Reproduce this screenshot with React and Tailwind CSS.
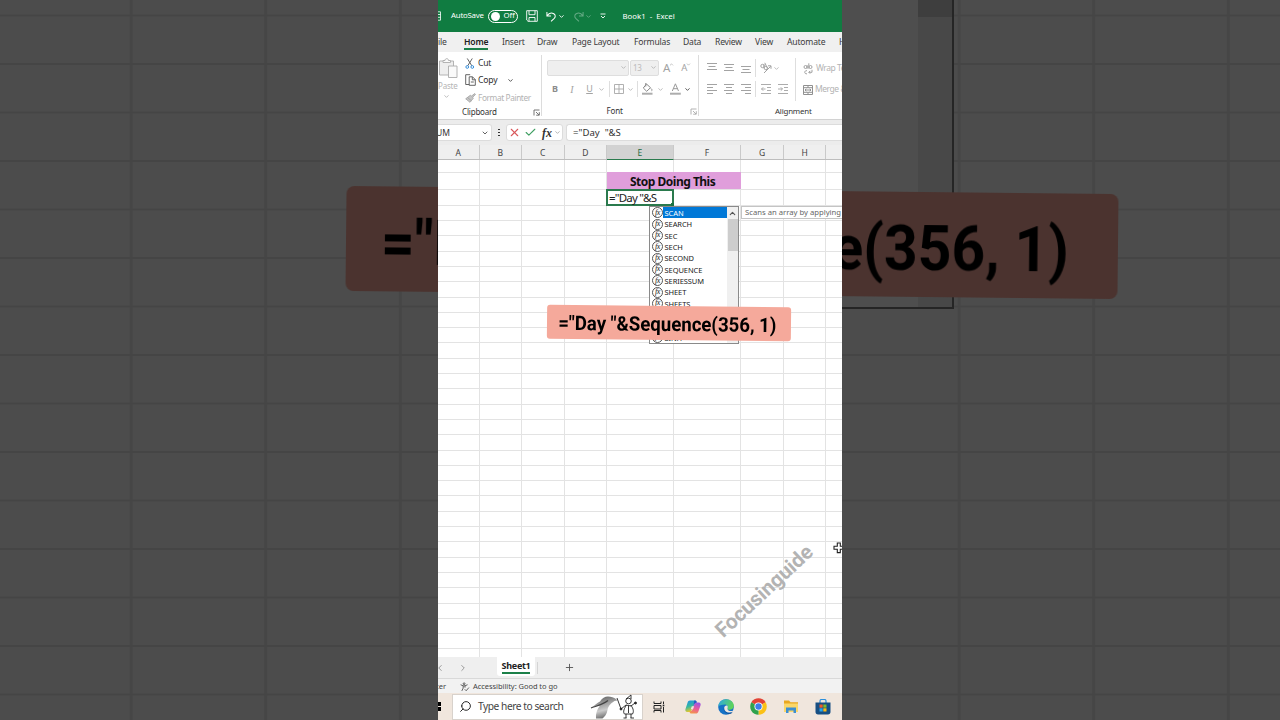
import { ChevronDown, ChevronLeft, ChevronRight, ChevronUp, Plus, X, Check, Search } from 'lucide-react';

const tabs = [
    { label: 'ile', width: 'w-[26px]' },
    { label: 'Home', width: 'w-[38px]', active: true },
    { label: 'Insert', width: 'w-[35px]' },
    { label: 'Draw', width: 'w-[35px]' },
    { label: 'Page Layout', width: 'w-[62px]' },
    { label: 'Formulas', width: 'w-[49px]' },
    { label: 'Data', width: 'w-[32px]' },
    { label: 'Review', width: 'w-[40px]' },
    { label: 'View', width: 'w-[32px]' },
    { label: 'Automate', width: 'w-[52px]' },
    { label: 'H', width: 'w-[26px]' },
];

const columns = [
    { name: 'A', width: 'w-[41.5px]' },
    { name: 'B', width: 'w-[42.3px]' },
    { name: 'C', width: 'w-[42.8px]' },
    { name: 'D', width: 'w-[42.4px]' },
    { name: 'E', width: 'w-[67px]' },
    { name: 'F', width: 'w-[67px]' },
    { name: 'G', width: 'w-[43px]' },
    { name: 'H', width: 'w-[42.5px]' },
    { name: '', width: 'w-[43px]' },
];

const functions = [
    'SCAN', 'SEARCH', 'SEC', 'SECH', 'SECOND', 'SEQUENCE',
    'SERIESSUM', 'SHEET', 'SHEETS', 'SIGN', 'SIN', 'SINH',
];

const Chevron = ({ className = 'text-[#b5b5b5]' }) => (
    <ChevronDown size={7} strokeWidth={3} className={`shrink-0 ${className}`} />
);

const Launcher = ({ className }) => (
    <svg viewBox="0 0 7 7" className={`size-[7px] ${className}`} fill="none" stroke="currentColor" strokeWidth="0.9">
        <path d="M6.5 1H1v5.5M3 3l3 3M6.3 3.2v3H3.2" />
    </svg>
);

const Lines = ({ rows }) => (
    <svg viewBox="0 0 10 12" className="w-[10px] h-[12px]" stroke="#a3a3a3" strokeWidth="1">
        {rows.map(([x1, x2, y]) => (
            <path key={y} d={`M${x1} ${y}H${x2}`} />
        ))}
    </svg>
);

const TitleBar = () => (
    <div className="h-8 shrink-0 bg-[#107c41] text-white flex items-center text-[7.8px]">
        <svg viewBox="0 0 3 10" className="w-[3px] h-[10px]" fill="none" stroke="#fff" strokeWidth="0.8">
            <path d="M0 .8h2.5v8.4H0M0 3.5h2.5M0 6.3h2.5" />
        </svg>
        <span className="ml-[10px] w-[37px] whitespace-nowrap tracking-[-0.2px]">AutoSave</span>
        <span className="w-[30px] h-[13px] rounded-full border border-white flex items-center pl-[2px]">
            <span className="size-[9px] rounded-full bg-white" />
            <span className="ml-[3.5px]">Off</span>
        </span>
        <svg viewBox="0 0 12 12" className="ml-[8px] size-[12px]" fill="none" stroke="#fff" strokeWidth="0.9">
            <path d="M.7.7h10.6v10.6H2L.7 10zM3 .7v4h6v-4M3 11.3V7.5h6v3.8" />
        </svg>
        <svg viewBox="0 0 12 12" className="ml-[8px] w-[11px] h-[13px]" fill="none" stroke="#fff" strokeWidth="1.1">
            <path d="M1 1v4.5h4.5M1.2 5.2C3 2.5 6 1.5 8.5 3c2 1.2 2 3.5.5 5L5.5 11.3" />
        </svg>
        <Chevron className="ml-px text-white" />
        <svg viewBox="0 0 12 12" className="ml-[8px] w-[11px] h-[13px] opacity-35" fill="none" stroke="#fff" strokeWidth="1.1">
            <path d="M11 1v4.5H6.5M10.8 5.2C9 2.5 6 1.5 3.5 3c-2 1.2-2 3.5-.5 5l3.5 3.3" />
        </svg>
        <Chevron className="ml-px text-white opacity-35" />
        <svg viewBox="0 0 6 6" className="ml-[8px] size-[6px]" fill="none" stroke="#fff" strokeWidth="0.9">
            <path d="M.5 1h5M1 3l2 2 2-2" />
        </svg>
        <span className="ml-[16.5px] pt-px whitespace-pre">Book1  -  Excel</span>
    </div>
);

const Tabs = () => (
    <div className="h-5 shrink-0 bg-[#f0f0f0] flex text-[8.6px] text-[#3b3b3b] tracking-[-0.2px]">
        {tabs.map((tab) => (
            <div key={tab.label} className={`shrink-0 whitespace-nowrap ${tab.width}`}>
                <span
                    className={`inline-block h-[18px] leading-[21px] ${
                        tab.active ? 'font-semibold text-[#222] border-b-2 border-[#1c8049]' : ''
                    }`}
                >
                    {tab.label}
                </span>
            </div>
        ))}
    </div>
);

const Clipboard = () => (
    <div className="w-[104px] shrink-0 border-r border-[#dcdcdc] flex flex-col my-[3px]">
        <div className="flex h-[51px]">
            <div className="w-[20px] flex flex-col items-start text-[#b5b5b5]">
                <svg viewBox="0 0 20 22" className="w-[20px] h-[22px] mt-[2px]" fill="#fafafa" stroke="#ababab" strokeWidth="0.9">
                    <path d="M1.5 4h14v14h-14z" fill="#eee" />
                    <path d="M5 5.5V3.5h2c0-2.500 3.500-2.500 3.500 0h2v2z" />
                    <path d="M10.5 9h8.500v11.500h-8.500z" />
                </svg>
                <span className="text-[8px] leading-[10px] mt-[2px] tracking-[-0.2px]">Paste</span>
                <Chevron className="ml-[5px] mt-[2px] text-[#b5b5b5]" />
            </div>
            <div className="ml-[7px] flex flex-col text-[8.6px] text-[#2e2e2e] whitespace-nowrap tracking-[-0.2px]">
                <div className="h-[17.5px] flex items-center">
                    <svg viewBox="0 0 10 12" className="w-[10px] h-[11px] mr-[3px]" fill="none" strokeWidth="1">
                        <path d="M2 .5l5 8M7.5.5l-5 8" stroke="#555" />
                        <circle cx="2" cy="9.8" r="1.5" stroke="#2b88d8" />
                        <circle cx="7.5" cy="9.8" r="1.5" stroke="#2b88d8" />
                    </svg>
                    Cut
                </div>
                <div className="h-[17.5px] flex items-center">
                    <svg viewBox="0 0 11 12" className="w-[11px] h-[12px] mr-[2px]" fill="#fff" stroke="#555" strokeWidth="0.9">
                        <path d="M5 10.5H.7V.7h4.500" fill="none" />
                        <path d="M4.2 2.8h3.300l2.800 2.800v5.700H4.200zM7.300 2.800v3h3M5.800 8h3" />
                    </svg>
                    Copy
                    <Chevron className="ml-[10px] text-[#444]" />
                </div>
                <div className="h-[17.5px] flex items-center pt-px text-[#b3b3b3]">
                    <svg viewBox="0 0 11 10" className="w-[11px] h-[10px] mr-[2px]" fill="#c6c6c6" stroke="#a0a0a0" strokeWidth="0.8">
                        <path d="M6.5 3L9.8.6l.7.8L7.7 4.3l.6 1L5 9.3.7 5.8 5.3 2.3z" />
                        <path d="M2.5 4.5l3.800 3.200" />
                    </svg>
                    <span className="tracking-[-0.4px] text-[8.3px]">Format Painter</span>
                </div>
            </div>
        </div>
        <div className="flex items-center h-[12px] text-[8px] text-[#333]">
            <span className="ml-[24px] w-[70.5px] tracking-[-0.18px]">Clipboard</span>
            <Launcher className="text-[#666]" />
        </div>
    </div>
);

const FontGroup = () => (
    <div className="w-[157px] shrink-0 border-r border-[#dcdcdc] flex flex-col my-[3px] text-[#a3a3a3]">
        <div className="flex flex-col h-[51px]">
            <div className="flex items-center h-[25px] pl-[5px]">
                <div className="w-[82px] h-[16px] rounded-[2px] bg-[#efefef] border border-[#dedede] flex items-center justify-end pr-px">
                    <Chevron />
                </div>
                <div className="ml-px w-[29px] h-[16px] rounded-[2px] bg-[#efefef] border border-[#dedede] flex items-center justify-between pl-[2px] pr-px text-[8px] tracking-[-0.3px] text-[#bbb]">
                    13
                    <Chevron />
                </div>
                <span className="ml-[4px] text-[11.5px] leading-none">A</span>
                <ChevronUp size={5} strokeWidth={3} className="mb-[7px] -ml-px" />
                <span className="ml-[7px] text-[9.5px] leading-none">A</span>
                <ChevronDown size={5} strokeWidth={3} className="mb-[7px] -ml-px" />
            </div>
            <div className="flex items-center h-[18px] text-[9px]">
                <span className="w-[26px] text-center font-bold text-[#8c8c8c]">B</span>
                <span className="w-[8px] text-center italic font-['Liberation_Serif',serif] text-[10px]">I</span>
                <span className="ml-[9px] w-[9px] text-center underline">U</span>
                <Chevron className="ml-[4px] text-[#b5b5b5]" />
                <span className="ml-[4px] h-[16px] w-px bg-[#dedede]" />
                <svg viewBox="0 0 10 10" className="ml-[3.5px] size-[10px]" fill="none" stroke="#a8a8a8" strokeWidth="0.9">
                    <path d="M.5.5h9v9h-9zM5 .5v9M.5 5h9" />
                </svg>
                <Chevron className="ml-[3.5px] text-[#b5b5b5]" />
                <span className="ml-[3px] h-[16px] w-px bg-[#dedede]" />
                <svg viewBox="0 0 11 12" className="ml-[4px] w-[11px] h-[12px]" fill="none" stroke="#888" strokeWidth="1">
                    <path d="M4.5 1l4 3.700-3.800 3.600L1.300 5zM3.800 0v3.500M9 5.500c1.500 1.300 1 2.300.5 2.300" />
                    <path d="M0 10.7h10.500" strokeWidth="2" stroke="#adadad" />
                </svg>
                <Chevron className="ml-[3.5px] text-[#b5b5b5]" />
                <svg viewBox="0 0 11 12" className="ml-[6px] w-[11px] h-[12px]" fill="none" stroke="#999" strokeWidth="1">
                    <path d="M2.3 8L5.400.800 8.500 8M3.300 5.700h4.200" />
                    <path d="M0 10.7h10.800" strokeWidth="2" stroke="#adadad" />
                </svg>
                <Chevron className="ml-[3.5px] text-[#444]" />
            </div>
        </div>
        <div className="flex items-center h-[12px] pt-[2px] text-[8px] text-[#333]">
            <span className="ml-[64.5px] w-[83px] tracking-[-0.18px]">Font</span>
            <Launcher className="text-[#aaa]" />
        </div>
    </div>
);

const Alignment = () => (
    <div className="flex flex-col flex-1 min-w-0 my-[3px] text-[8.5px] text-[#b3b3b3] whitespace-nowrap">
        <div className="flex h-[51px]">
            <div className="w-[96px] shrink-0 pt-[4px]">
                <div className="flex items-center h-[18px] pl-[8px]">
                    <Lines rows={[[0, 10, 1.5], [1.5, 8.5, 4.5], [0, 10, 7.5]]} />
                    <span className="w-[7px]" />
                    <Lines rows={[[0, 10, 2.5], [1.5, 8.5, 5.5], [0, 10, 8.5]]} />
                    <span className="w-[7px]" />
                    <Lines rows={[[0, 10, 4.5], [1.5, 8.5, 7.5], [0, 10, 10.5]]} />
                    <span className="ml-[4px] h-[18px] w-px bg-[#dedede]" />
                    <svg viewBox="0 0 12 12" className="ml-[4px] size-[12px]" fill="none" stroke="#a3a3a3" strokeWidth="1">
                        <circle cx="2.5" cy="4" r="1.7" />
                        <circle cx="5.8" cy="6" r="1.7" />
                        <path d="M4 2.2v4M4.800.800l2.400 5M4 11l6.800-6.800M8 3.800h3v3" />
                    </svg>
                    <Chevron className="ml-px text-[#b5b5b5]" />
                </div>
                <div className="flex items-center h-[18px] mt-[3px] pl-[8px]">
                    <Lines rows={[[0, 10, 1.5], [0, 6, 4.5], [0, 10, 7.5], [0, 6, 10.5]]} />
                    <span className="w-[7px]" />
                    <Lines rows={[[0, 10, 1.5], [2, 8, 4.5], [0, 10, 7.5], [2, 8, 10.5]]} />
                    <span className="w-[7px]" />
                    <Lines rows={[[0, 10, 1.5], [4, 10, 4.5], [0, 10, 7.5], [4, 10, 10.5]]} />
                    <span className="ml-[4px] h-[16px] w-px bg-[#dedede]" />
                    <svg viewBox="0 0 10 12" className="ml-[5px] w-[10px] h-[12px]" fill="none" stroke="#a3a3a3" strokeWidth="0.9">
                        <path d="M0 1.5h10M6 4.500h4M6 7.500h4M0 10.500h10M4.500 6H.500M2.200 4.300L.500 6l1.700 1.700" />
                    </svg>
                    <svg viewBox="0 0 10 12" className="ml-[7px] w-[10px] h-[12px]" fill="none" stroke="#a3a3a3" strokeWidth="0.9">
                        <path d="M0 1.5h10M6 4.500h4M6 7.500h4M0 10.500h10M0 6h4.500M2.800 4.300L4.500 6 2.800 7.700" />
                    </svg>
                </div>
            </div>
            <div className="border-l border-[#dedede] mt-[3px] h-[43px] pl-[7px] tracking-[-0.45px]">
                <div className="flex items-center h-[20px] pt-px">
                    <svg viewBox="0 0 10 12" className="w-[10px] h-[12px]" fill="none" stroke="#999" strokeWidth="0.9">
                        <circle cx="2.5" cy="4" r="1.5" />
                        <path d="M4.2 2.2v3.500M5.800.300v5.400" />
                        <circle cx="7.5" cy="4" r="1.5" />
                        <path d="M4 7.7c-3-.500-3 3.600 0 3.100M9 6.800v2.500H5.800M7.200 7.900L5.800 9.300l1.400 1.400" />
                    </svg>
                    <span className="ml-[3px]">Wrap Text</span>
                </div>
                <div className="flex items-center h-[23px]">
                    <svg viewBox="0 0 10 10" className="size-[10px]" fill="none" stroke="#909090" strokeWidth="1">
                        <path d="M.5.5h9v9h-9zM.5 2.7h9M.5 7.3h9M5 .5v2.200M5 7.300v2.200M2 5h6M3.300 3.800L2 5l1.300 1.200M6.700 3.800L8 5 6.700 6.200" />
                    </svg>
                    <span className="ml-[2px]">Merge &amp; Center</span>
                </div>
            </div>
        </div>
        <div className="h-[12px] pl-[76px] leading-[14px] text-[7.9px] tracking-[-0.2px] text-[#333]">Alignment</div>
    </div>
);

const FormulaBar = () => (
    <div className="h-[26px] shrink-0 bg-[#ececec] border-t border-[#d2d2d2] flex items-center text-[8.5px] text-[#333]">
        <div className="w-[54px] h-[17px] bg-white border border-l-0 border-[#dcdcdc] rounded-r-[3px] flex items-center justify-between pr-[2px]">
            <span className="-ml-[2px] pt-px">UM</span>
            <ChevronDown size={8} strokeWidth={2.5} className="text-[#444]" />
        </div>
        <div className="w-[14px] flex flex-col items-center gap-[1.5px]">
            <span className="size-[1.5px] bg-[#333]" />
            <span className="size-[1.5px] bg-[#333]" />
            <span className="size-[1.5px] bg-[#333]" />
        </div>
        <div className="w-[57px] h-[17px] bg-white border border-[#dcdcdc] rounded-[3px] flex items-center">
            <X size={13} strokeWidth={2} className="ml-px text-[#d9575b]" />
            <Check size={13} strokeWidth={2} className="ml-[3px] text-[#3f9f62]" />
            <span className="ml-[5px] font-['Liberation_Serif',serif] italic text-[12px] font-semibold leading-none">fx</span>
            <ChevronDown size={7} strokeWidth={2.5} className="ml-[2px] text-[#999]" />
        </div>
        <div className="ml-[3px] flex-1 h-[17px] bg-white border border-r-0 border-[#dcdcdc] rounded-l-[3px] pl-[6px] leading-[16px] text-[9.6px] whitespace-pre">
            {'="Day  "&S'}
        </div>
    </div>
);

const GridRow = ({ height }) => (
    <div className={`flex shrink-0 border-b border-[#e3e3e3] ${height}`}>
        {columns.map((col, i) => (
            <div key={i} className={`shrink-0 border-r border-[#e3e3e3] ${col.width}`} />
        ))}
    </div>
);

const Suggestions = () => (
    <div className="absolute left-[211px] top-[61px] w-[90px] h-[138px] bg-white border border-[#8a8a8a] flex overflow-hidden">
        <div className="flex-1">
            {functions.map((name, i) => (
                <div key={name} className="h-[11.35px] flex items-center pl-[2px] text-[7.5px] text-[#222]">
                    <span className="size-[11px] shrink-0 rounded-full border border-[#555] flex items-center justify-center font-['Liberation_Serif',serif] italic text-[8px] leading-none tracking-[-0.5px]">
                        fx
                    </span>
                    <span className={`flex-1 pl-[1.5px] h-full leading-[12px] tracking-[-0.08px] ${i === 0 ? 'bg-[#0078d7] text-white' : ''}`}>
                        {name}
                    </span>
                </div>
            ))}
        </div>
        <div className="w-[11px] bg-[#f0f0f0] flex flex-col items-center">
            <ChevronUp size={9} strokeWidth={3} className="text-[#555] my-[1.5px]" />
            <div className="w-[10px] h-[32px] bg-[#cdcdcd]" />
        </div>
    </div>
);

const Sheet = () => (
    <div className="relative flex-1 min-h-0 flex flex-col overflow-hidden bg-white">
        <div className="h-[15px] shrink-0 flex bg-[#efefef] border-b border-[#bdbdbd] text-[8.5px] leading-[15px] text-[#444]">
            {columns.map((col, i) => (
                <div
                    key={i}
                    className={`shrink-0 text-center border-r border-[#c9c9c9] ${col.width} ${
                        col.name === 'E' ? 'bg-[#d2d2d2] text-[#1e6b41] border-b border-b-[#2a7a4d] h-[15px]' : ''
                    }`}
                >
                    {col.name}
                </div>
            ))}
        </div>
        <GridRow height="h-[13px]" />
        <GridRow height="h-[17.3px]" />
        <GridRow height="h-[15.5px]" />
        {Array.from({ length: 30 }, (_, i) => (
            <GridRow key={i} height="h-[15.31px]" />
        ))}

        <div className="absolute left-[169px] top-[27px] w-[134px] h-[17px] bg-[#e09edb] pl-[23px] font-bold text-[12px] leading-[20px] text-[#111] tracking-[-0.5px]">
            Stop Doing This
        </div>
        <div className="absolute left-[168px] top-[44px] w-[68px] h-[17px] bg-white border-2 border-[#2a7a4d] pl-px text-[11.5px] leading-[14px] text-[#222] whitespace-nowrap tracking-[-0.8px]">
            ="Day "&amp;S
            <span className="absolute -right-[2px] -bottom-[2px] size-[3px] bg-[#1a7343]" />
        </div>
        <Suggestions />
        <div className="absolute left-[303px] top-[61px] w-[130px] h-[13px] bg-white border border-[#c4c4c4] pl-[3px] text-[7.7px] leading-[11px] text-[#666] whitespace-nowrap">
            Scans an array by applying a
        </div>
        <div className="absolute left-[109px] top-[161px] w-[244px] h-[34px] rounded-[3px] bg-[#f5a99b] rotate-[0.6deg] flex items-center justify-center pr-[4px] pt-px font-['Roboto',sans-serif] font-bold text-[20px] text-black whitespace-nowrap">
            <span className="scale-x-[0.93]">="Day "&amp;Sequence(356, 1)</span>
        </div>
        <div className="absolute left-[256px] top-[432px] w-[140px] h-[28px] -rotate-[43deg] text-center leading-[28px] font-['Roboto',sans-serif] font-bold text-[20.7px] text-[#b3b3b3]">
            Focusinguide
        </div>
        <svg viewBox="0 0 12 12" className="absolute left-[395px] top-[397px] size-[12px]" fill="#fff" stroke="#222" strokeWidth="1.1">
            <path d="M4.3 1h3v3.300h3.300v3H7.300v3.300h-3V7.300H1v-3h3.300z" />
        </svg>
    </div>
);

const SheetTabs = () => (
    <div className="h-[22px] shrink-0 bg-[#efefef] border-b border-[#d9d9d9] flex items-start text-[#888]">
        <ChevronLeft size={10} className="-ml-[3px] mt-[6px]" />
        <ChevronRight size={10} className="ml-[13px] mt-[6px]" />
        <div className="ml-[29px] w-[38px] h-[19px] rounded-b-[3px] bg-white flex justify-center">
            <span className="h-[17px] border-b-2 border-[#1c8049] text-[9px] leading-[18px] font-bold text-[#222] tracking-[-0.3px]">Sheet1</span>
        </div>
        <span className="ml-[2px] mt-[5px] w-px h-[12px] bg-[#d4d4d4]" />
        <Plus size={11} className="ml-[26px] mt-[5px] text-[#555]" />
    </div>
);

const StatusBar = () => (
    <div className="h-[14px] shrink-0 bg-[#f2f2f2] flex items-center pt-px text-[7.5px] text-[#444] whitespace-nowrap">
        <span className="w-[22px] -ml-[2px] mr-[2px]">ter</span>
        <svg viewBox="0 0 11 10" className="w-[10px] h-[10px]" fill="none" stroke="#444" strokeWidth="0.9">
            <circle cx="4.5" cy="1.4" r="1" />
            <path d="M.7 2.5l2.800 1.200h2l2.800-1.200M3.500 3.700v2.500L2 9.300M5.500 3.700v2M5.200 7.500l1.600 1.600 3-3.500" />
        </svg>
        <span className="ml-[3px] tracking-[-0.05px]">Accessibility: Good to go</span>
    </div>
);

const SearchArt = () => (
    <svg viewBox="0 0 48 25" className="w-[48px] h-[25px] shrink-0" fill="none">
        <defs>
            <linearGradient id="dolphin" x1="0" y1="0" x2="0.3" y2="1">
                <stop offset="0" stopColor="#555" />
                <stop offset="0.4" stopColor="#999" />
                <stop offset="0.7" stopColor="#ccc" />
                <stop offset="1" stopColor="#777" />
            </linearGradient>
        </defs>
        <path d="M1 14C5 11 7 9 10 7.5 12 4 15 2.5 18 2.5c3 0 6 1 8 2.500l1.500 1.500-3 .5c-5 3-6.500 6-7 9-.5 4-3 7-5 8.500H6c-.5-5 1-9 4-13-3 0-6 1-9 2.500z" fill="url(#dolphin)" />
        <path d="M1 14c5-2 11-3 17-7.500" stroke="#444" strokeWidth="1.2" />
        <g stroke="#222" strokeWidth="0.9">
            <path d="M27 4l4 11M31 15l5-4 5 1 4-3M36 5l5-4v4" />
            <circle cx="38.5" cy="7" r="2.8" />
            <path d="M36.5 11c-2 3-4 7-2 9h8c2-3 0-7-2-9M36 20v4M41 20v4M33.500 24h3M40.500 24h3.500M38.500 12v7" />
            <circle cx="31" cy="15" r="1" fill="#222" />
            <circle cx="45.5" cy="9" r="1" fill="#222" />
        </g>
    </svg>
);

const Taskbar = () => (
    <div className="h-[27px] shrink-0 bg-[#f0e6dd] flex items-center">
        <div className="w-[3px] flex flex-col gap-px">
            <span className="h-[4px] bg-black" />
            <span className="h-[4px] bg-black" />
        </div>
        <div className="ml-[11px] w-[191px] h-[26px] bg-white border border-[#d8d2cc] flex items-center">
            <Search size={13} strokeWidth={1.8} className="ml-[6px] text-[#222] -scale-x-100" />
            <span className="ml-[6px] w-[112px] pt-px text-[10.2px] tracking-[-0.45px] text-[#444] whitespace-nowrap">Type here to search</span>
            <SearchArt />
        </div>
        <svg viewBox="0 0 12 12" className="ml-[10px] size-[12px]" fill="none" stroke="#222" strokeWidth="1">
            <path d="M1 .5v2h7v-2M1 4.5h7v3.500H1zM1 11.500v-2h7v2M10.500.500v2.500M10.500 6v5.500" />
            <path d="M9.7 4.5h1.600" strokeWidth="1.7" />
        </svg>
        <svg viewBox="0 0 16 16" className="ml-[20px] size-[16px]">
            <defs>
                <linearGradient id="cpLeft" x1="0" y1="0" x2="0.3" y2="1">
                    <stop offset="0" stopColor="#1f8fe8" />
                    <stop offset="0.55" stopColor="#35b8a0" />
                    <stop offset="1" stopColor="#e9c82b" />
                </linearGradient>
                <linearGradient id="cpRight" x1="0.5" y1="0" x2="0.2" y2="1">
                    <stop offset="0" stopColor="#a056e0" />
                    <stop offset="0.5" stopColor="#ea5a9a" />
                    <stop offset="1" stopColor="#f59a45" />
                </linearGradient>
            </defs>
            <path d="M5 1.5h5c1 0 1.300.800 1.700 2L9 5 6.500 11.500c-.5 1-1 1.500-2 1.500H2.300C.500 13 0 11.500.500 10L2.700 3.300C3 2.200 3.800 1.500 5 1.500z" fill="url(#cpLeft)" />
            <path d="M11.5 3.5h2.200c1.800 0 2.300 1.500 1.800 3l-2.200 6.200c-.4 1.200-1.200 1.800-2.300 1.800H6.300c-1 0-1.500-.800-1.800-1.800L7 11.500 9.500 5c.4-1 1-1.500 2-1.500z" fill="url(#cpRight)" />
            <path d="M9.3 1.5h1c1 0 1.200.800 1.600 2-1.500 0-2 .500-2.400 1.500L8 9z" fill="#2356c7" />
            <path d="M6.8 7.2h2.400l-1.200 3H5.800z" fill="#f0e6dd" />
        </svg>
        <svg viewBox="0 0 16 16" className="ml-[17px] size-[16px]">
            <defs>
                <linearGradient id="edgeTop" x1="0" y1="0" x2="1" y2="0.3">
                    <stop offset="0" stopColor="#2aa7e6" />
                    <stop offset="1" stopColor="#5fd35a" />
                </linearGradient>
            </defs>
            <circle cx="8" cy="8" r="7.8" fill="#1571c6" />
            <path d="M.2 7.5C.8 3 4 .2 8.2.2c4.500 0 7.600 3 7.600 6.500 0 2.600-2 4-4.200 4-1.800 0-2.600-.700-2.100-1.500.8-1.300.1-3.700-2.700-3.700C3.500 5.500 1 6.500.200 7.500z" fill="url(#edgeTop)" />
            <path d="M6.5 7.2c-1.500 3.300.8 6.600 4.500 6.600 1.500 0 2.700-.400 3.600-.900-.5.900-1.300 1.500-2 1.900-4.500.500-8.600-3.300-6.100-7.600z" fill="#0d4a94" />
            <path d="M9.5 9.2c.5-1 .3-2-.3-2.700-1.500-.500-3 .600-3 2.500 0 3 2.500 4.800 5.300 4.500 1.800-.200 3-.900 3.800-1.800-2 .700-6.300.500-5.800-2.500z" fill="#f0e6dd" />
        </svg>
        <svg viewBox="0 0 16 16" className="ml-[16px] size-[17px]">
            <path d="M8 8L1.25 4.1A7.8 7.8 0 0 1 14.75 4.1z" fill="#e24335" />
            <path d="M8 8l6.75-3.9A7.8 7.8 0 0 1 8 15.8z" fill="#fbc116" />
            <path d="M8 8v7.8A7.8 7.8 0 0 1 1.25 4.1z" fill="#2fa24c" />
            <circle cx="8" cy="8" r="3.8" fill="#fff" />
            <circle cx="8" cy="8" r="3" fill="#3e7de8" />
        </svg>
        <svg viewBox="0 0 16 15" className="ml-[16px] w-[16px] h-[15px]">
            <path d="M1 1.5h5l1.5 1.7H15V13H1z" fill="#e9a820" />
            <path d="M1 4.5h14V13H1z" fill="#fbd769" />
            <path d="M3 8.5h10V14h-2.5v-2.5h-5V14H3z" fill="#3d8fd1" />
        </svg>
        <svg viewBox="0 0 16 16" className="ml-[16px] size-[16px]">
            <path d="M5 4V2c0-1 .5-1.5 1.5-1.5h3c1 0 1.500.500 1.500 1.500v2" fill="none" stroke="#2b8edb" strokeWidth="1.2" />
            <path d="M.5 3.5h15V13c0 1.500-1 2.500-2.500 2.500H3C1.500 15.500.500 14.500.500 13z" fill="#174f83" />
            <path d="M4.5 5.5h3.200v3.200H4.500z" fill="#f15b2a" />
            <path d="M8.3 5.5h3.200v3.200H8.300z" fill="#7fba2a" />
            <path d="M4.5 9.3h3.200v3.200H4.500z" fill="#27a5ec" />
            <path d="M8.3 9.3h3.200v3.200H8.300z" fill="#fdb913" />
        </svg>
    </div>
);

// Dimmed close-up of the sheet on both sides of the window
const Backdrop = () => (
    <div className="absolute inset-0 flex justify-between">
        <div className="w-[438px] bg-[linear-gradient(#454545_2px,transparent_2px),linear-gradient(90deg,#464646_3px,transparent_3px)] [background-size:134.6px_48.5px] [background-position:-5px_14.5px]" />
        <div className="relative w-[438px] bg-[linear-gradient(#454545_2px,transparent_2px),linear-gradient(90deg,#464646_3px,transparent_3px)] [background-size:134.6px_48.5px] [background-position:-19px_14.5px]">
            <div className="w-[112px] h-[309px] bg-[#4e4e4e] border-r-2 border-b-2 border-[#252525] flex justify-end">
                <div className="w-[34px] bg-[#484848]">
                    <div className="h-[17px] bg-[#3e3e3e]" />
                </div>
            </div>
        </div>
        {/* Only the two ends of the label show beside the window */}
        <div className="absolute left-[346px] top-[190px] w-[772px] h-[105px] rounded-[8px] bg-[#4b332f] rotate-[0.6deg] flex items-center justify-between pt-[10px] pl-[35px] pr-[49px] font-['Roboto',sans-serif] font-bold text-[63px] text-black whitespace-nowrap blur-[0.5px]">
            <span className="origin-left scale-x-[0.935]">="D</span>
            <span className="origin-right scale-x-[0.935]">e(356, 1)</span>
        </div>
    </div>
);

const App = () => {
    return (
        <div className="relative w-[1280px] h-[720px] overflow-hidden bg-[#4c4c4c] flex justify-center font-['Noto_Sans',sans-serif]">
            <Backdrop />
            <div className="relative w-[404px] h-[720px] bg-white overflow-hidden flex flex-col">
                <TitleBar />
                <Tabs />
                <div className="h-[67px] shrink-0 flex bg-white">
                    <Clipboard />
                    <FontGroup />
                    <Alignment />
                </div>
                <FormulaBar />
                <Sheet />
                <SheetTabs />
                <StatusBar />
                <Taskbar />
            </div>
        </div>
    );
};

export default App;
